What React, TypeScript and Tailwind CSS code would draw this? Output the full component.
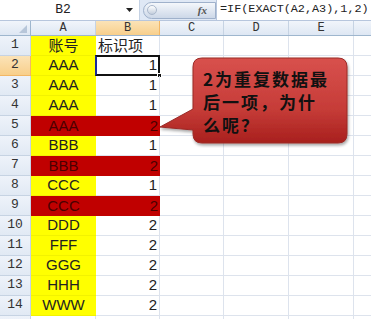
const cols = [
  { key: "A", w: 65 },
  { key: "B", w: 64 },
  { key: "C", w: 64 },
  { key: "D", w: 65 },
  { key: "E", w: 65 },
  { key: "F", w: 40 },
];

type Row = { a: string; b: string; red?: boolean; head?: boolean };

const rows: Row[] = [
  { a: "账号", b: "标识项", head: true },
  { a: "AAA", b: "1" },
  { a: "AAA", b: "1" },
  { a: "AAA", b: "1" },
  { a: "AAA", b: "2", red: true },
  { a: "BBB", b: "1" },
  { a: "BBB", b: "2", red: true },
  { a: "CCC", b: "1" },
  { a: "CCC", b: "2", red: true },
  { a: "DDD", b: "2" },
  { a: "FFF", b: "2" },
  { a: "GGG", b: "2" },
  { a: "HHH", b: "2" },
  { a: "WWW", b: "2" },
  { a: "", b: "" },
];

function Callout() {
  return (
    <div className="absolute left-[156px] top-[54px] w-[196px] h-[94px]">
      <svg width="196" height="94" viewBox="0 0 196 94" className="absolute inset-0">
        <defs>
          <linearGradient id="cg" x1="0" y1="0" x2="0" y2="1">
            <stop offset="0" stopColor="#d8514d" />
            <stop offset="0.6" stopColor="#c63c38" />
            <stop offset="1" stopColor="#a8201d" />
          </linearGradient>
          <filter id="sh" x="-10%" y="-10%" width="125%" height="130%">
            <feDropShadow dx="1" dy="2" stdDeviation="1.5" floodColor="#000" floodOpacity="0.35" />
          </filter>
        </defs>
        <path
          d="M46 4 H182 Q191 4 191 13 V80 Q191 89 182 89 H46 Q37 89 37 80 V76 L4 73 L37 55 V13 Q37 4 46 4 Z"
          fill="url(#cg)"
          stroke="#9a2a27"
          strokeWidth="1"
          filter="url(#sh)"
        />
      </svg>
      <div className="absolute left-[47px] top-[13px] w-[140px] text-[17px] leading-[23px] font-bold text-[#111] tracking-[2px] [font-family:'Noto_Sans_CJK_SC',sans-serif]">
        <div>2为重复数据最</div>
        <div>后一项，为什</div>
        <div>么呢？</div>
      </div>
    </div>
  );
}

export default function App() {
  return (
    <div className="relative w-[371px] h-[319px] overflow-hidden bg-white">
      {/* 编辑栏 */}
      <div className="flex items-center h-[21px] bg-[#dfe8f5] border-b border-[#b7c6dd]">
        <div className="w-[140px] shrink-0 h-[20px] bg-white flex items-center border-r border-[#c5d2e4]">
          <span className="w-[126px] text-center text-[13px] text-[#222] [font-family:'Liberation_Mono',monospace]">B2</span>
          <svg width="8" height="5" viewBox="0 0 8 5">
            <path d="M0 0 H7 L3.5 4 Z" fill="#222" />
          </svg>
        </div>
        <div className="w-[73px] shrink-0 h-[17px] ml-[3px] rounded-l-full bg-gradient-to-b from-[#f4f7fb] to-[#cdd8e8] border border-[#9fb1cb] flex items-center">
          <span className="ml-[3px] w-[10px] h-[10px] rounded-full bg-gradient-to-b from-white to-[#c3cedd] border border-[#aab8cc]" />
          <span className="ml-auto mr-[8px] text-[11px] italic font-bold text-[#555] [font-family:'Liberation_Serif',serif]">fx</span>
        </div>
        <div className="w-[155px] shrink-0 h-[20px] bg-white flex items-center pl-[3px] border-l border-[#b7c6dd]">
          <span className="text-[11.8px] text-[#222] whitespace-nowrap [font-family:'Liberation_Mono',monospace]">=IF(EXACT(A2,A3),1,2)</span>
        </div>
      </div>

      {/* 列标题 */}
      <div className="flex h-[15px] bg-gradient-to-b from-[#f1f5fb] to-[#dee7f3] border-b border-[#9eb6ce]">
        <div className="w-[31px] shrink-0 border-r border-[#9eb6ce] relative">
          <svg width="8" height="8" viewBox="0 0 8 8" className="absolute right-[3px] bottom-[2px]">
            <path d="M8 0 V8 H0 Z" fill="#b7c6d9" />
          </svg>
        </div>
        {cols.map((c) => (
          <div
            key={c.key}
            style={{ width: c.w }}
            className={`shrink-0 flex items-center justify-center border-r border-[#c6d3e3] text-[12px] text-[#333] [font-family:'Liberation_Mono',monospace] ${
              c.key === "B" ? "bg-gradient-to-b from-[#fbe3b7] to-[#f8cf8b] border-[#f2b766]" : ""
            }`}
          >
            {c.key === "F" ? "" : c.key}
          </div>
        ))}
      </div>

      {/* 数据行 */}
      {rows.map((r, i) => {
        const n = i + 1;
        const active = n === 2;
        return (
          <div key={n} className="flex h-[20px]">
            <div
              className={`w-[31px] shrink-0 flex items-end justify-center pb-[1px] border-r border-b text-[13px] text-[#333] [font-family:'Liberation_Mono',monospace] ${
                active
                  ? "bg-gradient-to-b from-[#fbe3b7] to-[#f8cf8b] border-[#f2b766]"
                  : "bg-gradient-to-b from-[#eef3fa] to-[#e1e9f4] border-[#c6d3e3]"
              }`}
            >
              {n < 15 ? n : ""}
            </div>
            <div
              className={`w-[65px] shrink-0 flex items-center justify-center text-[15px] [font-family:'Liberation_Sans',sans-serif] ${
                r.head ? "[font-family:'Noto_Sans_CJK_SC',sans-serif]" : ""
              } ${
                r.red
                  ? "bg-[#c00000] text-[#4a0000]"
                  : r.a || r.head
                  ? "bg-[#ffff00] text-[#222] border-b border-[#f2f200]"
                  : "border-b border-r border-[#dde3ed]"
              }`}
            >
              {r.a}
            </div>
            <div
              className={`relative w-[64px] shrink-0 flex items-center text-[15px] [font-family:'Liberation_Sans',sans-serif] ${
                r.head ? "justify-start pl-[2px] text-[#222] [font-family:'Noto_Sans_CJK_SC',sans-serif]" : "justify-end pr-[2px]"
              } ${
                r.red
                  ? "bg-[#c00000] text-[#4a0000]"
                  : "text-[#222] border-b border-r border-[#dde3ed]"
              }`}
            >
              {r.b}
              {active && (
                <>
                  <span className="absolute inset-[-1px] border-2 border-[#111] border-l-[#1a2a9a]" />
                  <span className="absolute right-[-3px] bottom-[-3px] w-[5px] h-[5px] bg-[#111] border border-white" />
                </>
              )}
            </div>
            {cols.slice(2).map((c) => (
              <div
                key={c.key}
                style={{ width: c.w }}
                className="shrink-0 border-b border-r border-[#dde3ed]"
              />
            ))}
          </div>
        );
      })}

      <Callout />
    </div>
  );
}
